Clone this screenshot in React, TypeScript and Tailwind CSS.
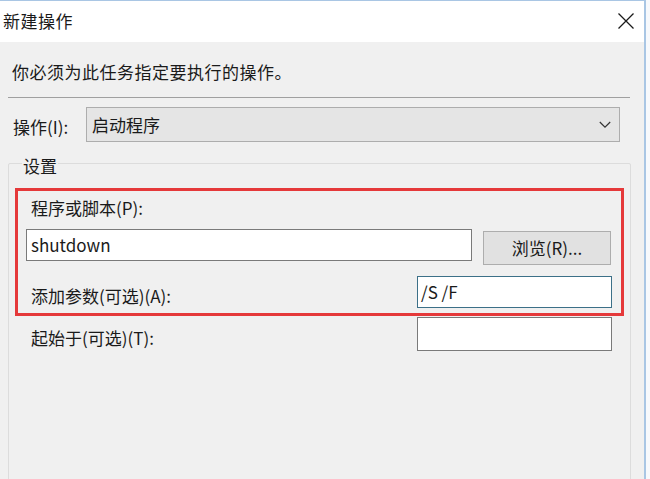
import React from "react";

const font = { fontFamily: '"Noto Sans CJK SC", "Noto Sans", sans-serif' };

export default function App() {
  return (
    <div className="w-[650px] h-[479px] overflow-hidden bg-[#f7f9fc] flex text-[#1a1a1a]" style={font}>
      <div className="w-[646px] h-[479px] shrink-0 border-t border-r-2 border-[#a9c6e4] bg-[#f0f0f0] flex flex-col">
        {/* Title bar */}
        <div className="h-[41px] bg-white flex items-center justify-between pl-[3px] pr-[10px] shrink-0">
          <span className="text-[17px] leading-[24px] -mt-[2px] tracking-[0.5px]">新建操作</span>
          <svg width="16" height="16" viewBox="0 0 16 16" className="-mt-[2px]">
            <path d="M0.5 0.5 L15.5 15.5 M15.5 0.5 L0.5 15.5" stroke="#1a1a1a" strokeWidth="1.3" fill="none" />
          </svg>
        </div>

        {/* Instruction */}
        <div className="h-[55px] pl-[12px] pt-[18px] shrink-0">
          <span className="text-[17px] leading-[24px] tracking-[0.5px]">你必须为此任务指定要执行的操作。</span>
        </div>

        {/* Separator */}
        <div className="ml-[8px] w-[622px] h-px bg-[#a0a0a0] shrink-0" />

        {/* Action row */}
        <div className="mt-[9px] flex items-center shrink-0">
          <span className="w-[86px] pl-[13px] text-[17px] leading-[24px] mt-[4px]">操作(I):</span>
          <div className="w-[534px] h-[35px] bg-[#e5e5e5] border border-[#adadad] flex items-center justify-between pl-[5px] pr-[8px]">
            <span className="text-[17px] leading-[24px]">启动程序</span>
            <svg width="12" height="8" viewBox="0 0 12 8">
              <path d="M0.8 1 L6 6.2 L11.2 1" stroke="#333" strokeWidth="1.2" fill="none" />
            </svg>
          </div>
        </div>

        {/* Group box */}
        <div className="relative mt-[21px] ml-[8px] w-[623px] h-[400px] border border-[#dcdcdc] rounded-[2px] shrink-0">
          <span className="absolute -top-[10px] left-[13px] px-[1px] bg-[#f0f0f0] text-[17px] leading-[24px]">设置</span>

          {/* Red highlight */}
          <div className="mt-[24px] ml-[6px] w-[609px] border-[3px] border-[#e5393a] flex flex-col">
            <div className="h-[34px] flex items-center pl-[13px]">
              <span className="text-[17px] leading-[24px]">程序或脚本(P):</span>
            </div>
            <div className="flex items-start">
              <div className="mt-[4px] ml-[8px] w-[446px] h-[32px] bg-white border border-[#7a7a7a] flex items-center pl-[4px]">
                <span className="text-[17px] leading-[24px]">shutdown</span>
              </div>
              <div className="mt-[6px] ml-[11px] w-[128px] h-[34px] bg-[#e1e1e1] border border-[#adadad] flex items-center justify-center">
                <span className="text-[17px] leading-[24px]">浏览(R)...</span>
              </div>
            </div>
            <div className="mt-[11px] mb-[5px] flex items-start">
              <span className="pl-[13px] pt-[8px] text-[17px] leading-[24px]">添加参数(可选)(A):</span>
              <div className="ml-auto mr-[9px] w-[195px] h-[32px] bg-white border border-[#3c7088] flex items-center pl-[3px]">
                <span className="text-[17px] leading-[24px]">/S /F</span>
              </div>
            </div>
          </div>

          {/* Start in */}
          <div className="mt-[1px] flex items-start">
            <span className="pl-[22px] pt-[9px] text-[17px] leading-[24px]">起始于(可选)(T):</span>
            <div className="ml-auto mr-[18px] w-[195px] h-[34px] bg-white border border-[#7a7a7a]" />
          </div>
        </div>
      </div>
    </div>
  );
}
